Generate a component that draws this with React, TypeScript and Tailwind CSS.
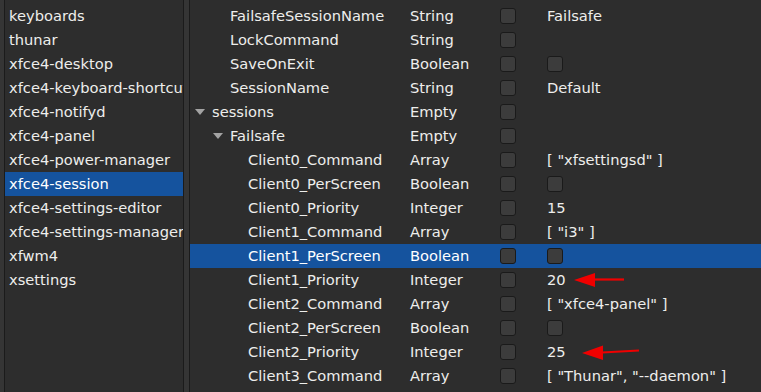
import React from 'react';

type Row = {
  name: string;
  type: string;
  level: number;
  expander?: boolean;
  value?: string;
  boolValue?: boolean;
  selected?: boolean;
  arrow?: 1 | 2;
};

const channels = [
  'keyboards',
  'thunar',
  'xfce4-desktop',
  'xfce4-keyboard-shortcuts',
  'xfce4-notifyd',
  'xfce4-panel',
  'xfce4-power-manager',
  'xfce4-session',
  'xfce4-settings-editor',
  'xfce4-settings-manager',
  'xfwm4',
  'xsettings',
];

const rows: Row[] = [
  { name: 'general', type: 'Empty', level: 0, expander: true },
  { name: 'FailsafeSessionName', type: 'String', level: 1, value: 'Failsafe' },
  { name: 'LockCommand', type: 'String', level: 1, value: '' },
  { name: 'SaveOnExit', type: 'Boolean', level: 1, boolValue: true },
  { name: 'SessionName', type: 'String', level: 1, value: 'Default' },
  { name: 'sessions', type: 'Empty', level: 0, expander: true },
  { name: 'Failsafe', type: 'Empty', level: 1, expander: true },
  { name: 'Client0_Command', type: 'Array', level: 2, value: '[ "xfsettingsd" ]' },
  { name: 'Client0_PerScreen', type: 'Boolean', level: 2, boolValue: true },
  { name: 'Client0_Priority', type: 'Integer', level: 2, value: '15' },
  { name: 'Client1_Command', type: 'Array', level: 2, value: '[ "i3" ]' },
  { name: 'Client1_PerScreen', type: 'Boolean', level: 2, boolValue: true, selected: true },
  { name: 'Client1_Priority', type: 'Integer', level: 2, value: '20', arrow: 1 },
  { name: 'Client2_Command', type: 'Array', level: 2, value: '[ "xfce4-panel" ]' },
  { name: 'Client2_PerScreen', type: 'Boolean', level: 2, boolValue: true },
  { name: 'Client2_Priority', type: 'Integer', level: 2, value: '25', arrow: 2 },
  { name: 'Client3_Command', type: 'Array', level: 2, value: '[ "Thunar", "--daemon" ]' },
  { name: 'Client3_PerScreen', type: 'Boolean', level: 2, boolValue: true },
];

const Check = () => (
  <span className="block w-[16px] h-[16px] rounded-[3px] border border-[#1a1a1a] bg-[#3c3c3c]" />
);

const Expander = () => (
  <svg width="10" height="6" viewBox="0 0 10 6" className="shrink-0">
    <path d="M0 0 L10 0 L5 6 Z" fill="#a3a3a3" />
  </svg>
);

const RedArrow = ({ kind }: { kind: 1 | 2 }) =>
  kind === 1 ? (
    <svg width="52" height="18" viewBox="0 0 52 18" className="ml-[8px]">
      <path d="M20 8.5 L50 8.5" stroke="#f00000" strokeWidth="2.2" />
      <path d="M0 9 L21 2 L21 16 Z" fill="#f00000" />
    </svg>
  ) : (
    <svg width="58" height="18" viewBox="0 0 58 18" className="ml-[16px]">
      <path d="M20 9.5 L57 7.5" stroke="#f00000" strokeWidth="2.2" />
      <path d="M0 10 L21 2.5 L21 17 Z" fill="#f00000" />
    </svg>
  );

export default function App() {
  return (
    <div
      className="w-[761px] h-[392px] overflow-hidden flex bg-[#353535] text-[#eeeeec] text-[14.67px]"
      style={{ fontFamily: '"DejaVu Sans", sans-serif' }}
    >
      {/* Channel list */}
      <div className="ml-[4px] w-[180px] h-full border-x border-[#1b1b1b] bg-[#2d2d2d] overflow-hidden">
        <div className="pt-[4px]">
          {channels.map((c) => (
            <div
              key={c}
              className={`h-[24px] flex items-center pl-[4px] whitespace-nowrap overflow-hidden ${
                c === 'xfce4-session' ? 'bg-[#15539e] text-white' : ''
              }`}
            >
              {c}
            </div>
          ))}
        </div>
      </div>

      {/* Pane handle */}
      <div className="w-[5px] shrink-0" />

      {/* Property tree */}
      <div className="flex-1 h-full border-l border-[#1b1b1b] bg-[#2d2d2d] overflow-hidden">
        <div className="-mt-[20px]">
          {rows.map((r) => (
            <div
              key={r.name}
              className={`h-[24px] flex items-center whitespace-nowrap ${
                r.selected ? 'bg-[#15539e] text-white' : ''
              }`}
            >
              <div className="w-[220px] flex items-center">
                <div
                  className={
                    r.level === 0 ? 'w-[22px]' : r.level === 1 ? 'w-[40px]' : 'w-[58px]'
                  }
                >
                  {r.expander && (
                    <div className={r.level === 0 ? 'pl-[5px]' : 'pl-[23px]'}>
                      <Expander />
                    </div>
                  )}
                </div>
                <span>{r.name}</span>
              </div>
              <div className="w-[90px]">{r.type}</div>
              <div className="w-[47px] flex">
                <Check />
              </div>
              <div className="flex items-center">
                {r.boolValue ? <Check /> : <span>{r.value}</span>}
                {r.arrow && <RedArrow kind={r.arrow} />}
              </div>
            </div>
          ))}
        </div>
      </div>
    </div>
  );
}
